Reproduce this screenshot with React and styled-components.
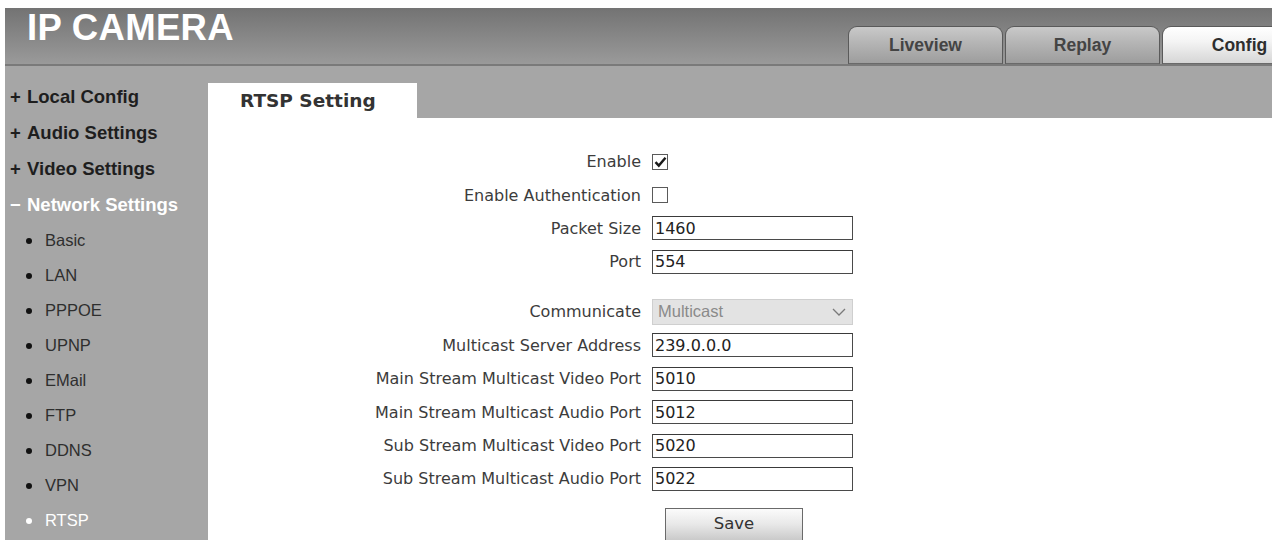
import React from "react";
import styled, { createGlobalStyle } from "styled-components";

const GlobalStyle = createGlobalStyle`
    html, body {
        margin: 0;
        padding: 0;
        background: #fff;
        overflow: hidden;
    }
`;

const Page = styled.div`
    width: 1320px;
    height: 540px;
    padding: 8px 0 0 5px;
    box-sizing: border-box;
    display: flex;
    flex-direction: column;
`;

const Header = styled.header`
    height: 56px;
    flex-shrink: 0;
    display: flex;
    justify-content: space-between;
    align-items: flex-end;
    background: linear-gradient(#737373, #9a9a9a);
    border-bottom: 2px solid #7a7a7a;
    padding: 0 3px 0 22px;
`;

const Title = styled.h1`
    align-self: flex-start;
    margin: 2px 0 0;
    font-family: "Liberation Sans", Arial, sans-serif;
    font-size: 36.5px;
    line-height: 36px;
    font-weight: 700;
    color: #fff;
    letter-spacing: 0.3px;
`;

const NavTabs = styled.nav`
    display: flex;
    gap: 2px;
`;

const NavTab = styled.div`
    width: 155px;
    height: 38px;
    box-sizing: border-box;
    display: flex;
    align-items: center;
    justify-content: center;
    border: 1px solid #5a5a5a;
    border-bottom-color: #6a6a6a;
    border-radius: 9px 9px 0 0;
    background: ${props =>
        props.active
            ? "linear-gradient(#ffffff, #f4f4f4 40%, #d6d6d6)"
            : "linear-gradient(#c9c9c9, #b4b4b4 45%, #9d9d9d)"};
    font-family: "Liberation Sans", Arial, sans-serif;
    font-weight: 700;
    font-size: 17.5px;
    color: ${props => (props.active ? "#2e2e2e" : "#444")};
    padding-top: 1px;
`;

const Body = styled.div`
    flex: 1;
    display: grid;
    grid-template-columns: 203px 1fr;
`;

const Sidebar = styled.aside`
    background: #a6a6a6;
    padding: 13px 0 0 5px;
    font-family: "Liberation Sans", Arial, sans-serif;
`;

const MenuGroup = styled.div`
    height: 36px;
    display: flex;
    align-items: center;
    font-size: 18.5px;
    font-weight: 700;
    color: ${props => (props.open ? "#fff" : "#1e1e1e")};
`;

const Sign = styled.span`
    width: 17px;
    display: inline-block;
    font-weight: 700;
`;

const MenuItem = styled.div`
    height: 35px;
    display: flex;
    align-items: center;
    padding-left: 16px;
    font-size: 16.5px;
    color: ${props => (props.current ? "#fff" : "#2e2e2e")};
    &::before {
        content: "";
        width: 6px;
        height: 6px;
        border-radius: 50%;
        background: ${props => (props.current ? "#fff" : "#111")};
        margin-right: 13px;
    }
`;

const Main = styled.main`
    background: #fff;
    display: flex;
    flex-direction: column;
`;

const TabStrip = styled.div`
    background: #a6a6a6;
    padding-top: 17px;
    display: flex;
`;

const PanelTab = styled.div`
    width: 209px;
    height: 35px;
    box-sizing: border-box;
    background: #fff;
    padding-left: 32px;
    display: flex;
    align-items: center;
    font-family: "DejaVu Sans", Tahoma, sans-serif;
    font-weight: 700;
    font-size: 18.5px;
    color: #333;
`;

const Form = styled.form`
    padding-top: 27px;
    font-family: "DejaVu Sans", Tahoma, sans-serif;
    font-size: 16px;
    color: #3c3c3c;
`;

const Row = styled.div`
    display: grid;
    grid-template-columns: 433px 201px;
    column-gap: 11px;
    align-items: center;
    height: 33.4px;
    margin-top: ${props => (props.spaced ? "16.7px" : "0")};
`;

const Label = styled.label`
    text-align: right;
    white-space: nowrap;
`;

const TextBox = styled.div`
    height: 24px;
    box-sizing: border-box;
    border: 1px solid #4a4a4a;
    border-top-color: #3a3a3a;
    padding: 0 2px;
    display: flex;
    align-items: center;
    color: #222;
`;

const CheckBox = styled.span`
    width: 16px;
    height: 16px;
    box-sizing: border-box;
    border: 1px solid #5a5a5a;
    background: #fff;
    display: flex;
    align-items: center;
    justify-content: center;
`;

const SelectBox = styled.div`
    height: 26px;
    box-sizing: border-box;
    border: 1px solid #cfcfcf;
    background: #e3e3e3;
    padding: 0 6px 0 5px;
    display: flex;
    align-items: center;
    justify-content: space-between;
    font-family: "Liberation Sans", Arial, sans-serif;
    font-size: 16.5px;
    color: #8a8a8a;
`;

const SaveButton = styled.button`
    margin: 12px 0 0 457px;
    width: 138px;
    height: 36px;
    border: 1px solid #6a6a6a;
    background: linear-gradient(#fbfbfb, #e8e8e8 45%, #c4c4c4);
    font-family: "DejaVu Sans", Tahoma, sans-serif;
    font-size: 16.5px;
    color: #333;
    padding: 0 0 4px;
    display: flex;
    align-items: center;
    justify-content: center;
`;

const groups = ["Local Config", "Audio Settings", "Video Settings"];
const networkItems = ["Basic", "LAN", "PPPOE", "UPNP", "EMail", "FTP", "DDNS", "VPN", "RTSP"];

const fields = [
    { label: "Enable", type: "check", checked: true },
    { label: "Enable Authentication", type: "check", checked: false },
    { label: "Packet Size", value: "1460" },
    { label: "Port", value: "554" },
    { label: "Communicate", type: "select", value: "Multicast", spaced: true },
    { label: "Multicast Server Address", value: "239.0.0.0" },
    { label: "Main Stream Multicast Video Port", value: "5010" },
    { label: "Main Stream Multicast Audio Port", value: "5012" },
    { label: "Sub Stream Multicast Video Port", value: "5020" },
    { label: "Sub Stream Multicast Audio Port", value: "5022" }
];

const Tick = () => (
    <svg width="13" height="12" viewBox="0 0 13 12">
        <path d="M1.5 6.2 L4.8 9.6 L11.5 1.8" fill="none" stroke="#1a1a1a" strokeWidth="2.4" />
    </svg>
);

const Chevron = () => (
    <svg width="14" height="8" viewBox="0 0 14 8">
        <path d="M1 1 L7 7 L13 1" fill="none" stroke="#7a7a7a" strokeWidth="1.3" />
    </svg>
);

const renderControl = field => {
    if (field.type === "check") {
        return <CheckBox>{field.checked && <Tick />}</CheckBox>;
    }
    if (field.type === "select") {
        return (
            <SelectBox>
                {field.value}
                <Chevron />
            </SelectBox>
        );
    }
    return <TextBox>{field.value}</TextBox>;
};

export default function App() {
    return (
        <Page>
            <GlobalStyle />
            <Header>
                <Title>IP CAMERA</Title>
                <NavTabs>
                    <NavTab>Liveview</NavTab>
                    <NavTab>Replay</NavTab>
                    <NavTab active>Config</NavTab>
                </NavTabs>
            </Header>
            <Body>
                <Sidebar>
                    {groups.map(g => (
                        <MenuGroup key={g}>
                            <Sign>+</Sign>
                            {g}
                        </MenuGroup>
                    ))}
                    <MenuGroup open>
                        <Sign>−</Sign>
                        Network Settings
                    </MenuGroup>
                    {networkItems.map(item => (
                        <MenuItem key={item} current={item === "RTSP"}>
                            {item}
                        </MenuItem>
                    ))}
                </Sidebar>
                <Main>
                    <TabStrip>
                        <PanelTab>RTSP Setting</PanelTab>
                    </TabStrip>
                    <Form onSubmit={e => e.preventDefault()}>
                        {fields.map(f => (
                            <Row key={f.label} spaced={f.spaced}>
                                <Label>{f.label}</Label>
                                {renderControl(f)}
                            </Row>
                        ))}
                        <SaveButton type="button">Save</SaveButton>
                    </Form>
                </Main>
            </Body>
        </Page>
    );
}
